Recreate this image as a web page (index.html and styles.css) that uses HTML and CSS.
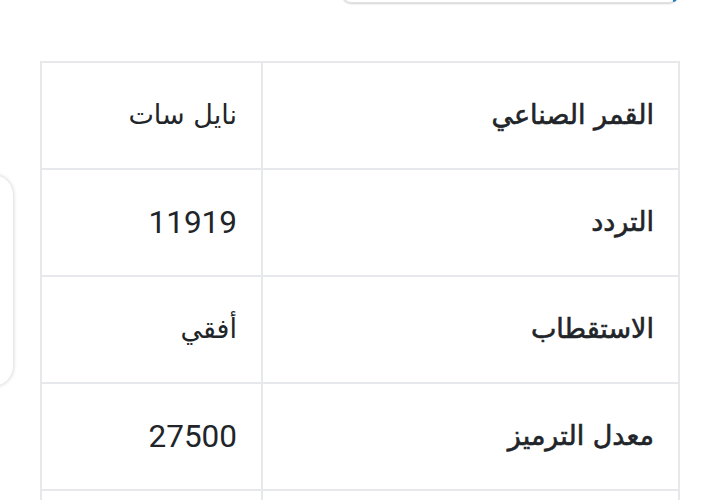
FILE: index.html
```html
<!DOCTYPE html>
<html lang="ar">
<head>
<meta charset="utf-8">
<link rel="stylesheet" href="styles.css">
</head>
<body>
<div class="page">
  <div class="topbox"><span class="topbox-accent"></span></div>
  <div class="side-card"></div>
  <table class="specs" dir="rtl">
    <tbody>
      <tr><td class="label">القمر الصناعي</td><td class="value">نايل سات</td></tr>
      <tr><td class="label">التردد</td><td class="value"><span class="num">11919</span></td></tr>
      <tr><td class="label">الاستقطاب</td><td class="value">أفقي</td></tr>
      <tr><td class="label">معدل الترميز</td><td class="value"><span class="num">27500</span></td></tr>
      <tr><td class="label">&nbsp;</td><td class="value">&nbsp;</td></tr>
    </tbody>
  </table>
</div>
</body>
</html>
```

FILE: styles.css
```css
html, body {
  margin: 0;
  padding: 0;
  background: #ffffff;
  overflow: hidden;
  height: 500px;
}
.page {
  position: relative;
  width: 713px;
  font-family: "DejaVu Sans", Roboto, sans-serif;
  color: #212529;
}
.topbox {
  position: relative;
  box-sizing: border-box;
  width: 336px;
  height: 42px;
  margin: -39px 0 0 342px;
  border: 1px solid #e2e2e2;
  border-radius: 9px;
  box-shadow: 0 1px 2px rgba(0,0,0,0.18);
  background: #fff;
}
.topbox-accent {
  position: absolute;
  right: 0;
  bottom: 0;
  width: 4px;
  height: 5px;
  background: #1f7fc0;
  border-radius: 0 0 6px 0;
}
.side-card {
  position: absolute;
  left: -30px;
  top: 214px;
  width: 43px;
  height: 211px;
  border-radius: 20px;
  background: #fff;
  box-shadow: 0 0 4px rgba(0,0,0,0.22);
}
.specs {
  margin: 58px 0 0 40px;
  width: 640px;
  border-collapse: collapse;
  table-layout: fixed;
}
.specs td {
  border: 2px solid #e6e8eb;
  height: 105px;
  padding: 0 24px;
  text-align: right;
  vertical-align: middle;
  font-size: 27px;
  line-height: 1.2;
}
.specs td.label {
  width: 367px;
  font-weight: 400;
  -webkit-text-stroke: 0.6px #212529;
}
.specs td.value {
  font-weight: 400;
}
.num {
  font-family: Roboto, sans-serif;
  font-size: 31.5px;
}
```
